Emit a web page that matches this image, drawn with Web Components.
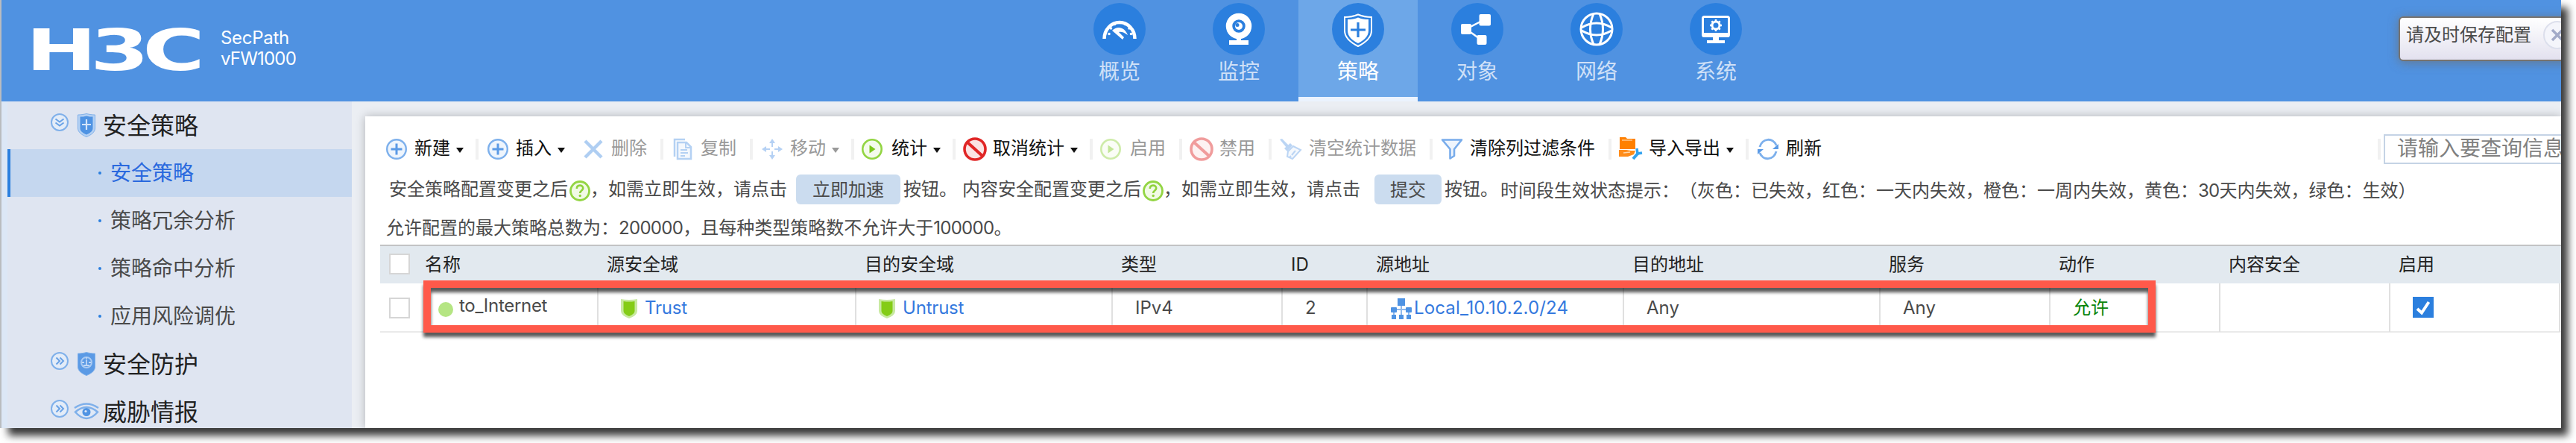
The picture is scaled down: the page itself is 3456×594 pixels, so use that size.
<!DOCTYPE html>
<html lang="zh-CN">
<head>
<meta charset="utf-8">
<title>SecPath vFW1000</title>
<style>
  body {
    margin: 0;
    width: 3456px;
    height: 594px;
    overflow: hidden;
    background: #fff;
    font-family: Inter, "Noto Sans CJK SC", sans-serif;
    font-size: 24px;
    color: #4a4a4a;
    text-spacing-trim: space-all;
  }
</style>
</head>
<body>
<app-window>
  <top-header slot="header">
    <nav-tab icon="gauge">概览</nav-tab>
    <nav-tab icon="camera">监控</nav-tab>
    <nav-tab icon="policy" active>策略</nav-tab>
    <nav-tab icon="share">对象</nav-tab>
    <nav-tab icon="globe">网络</nav-tab>
    <nav-tab icon="monitor">系统</nav-tab>
  </top-header>
  <side-menu slot="side">
    <menu-group icon="shieldPlus" open>安全策略</menu-group>
    <menu-item active>安全策略</menu-item>
    <menu-item>策略冗余分析</menu-item>
    <menu-item>策略命中分析</menu-item>
    <menu-item>应用风险调优</menu-item>
    <menu-group icon="shieldFace">安全防护</menu-group>
    <menu-group icon="eye">威胁情报</menu-group>
  </side-menu>
  <tool-bar>
    <tool-item icon="plus" arrow>新建</tool-item>
    <tool-item icon="plus" arrow nosep>插入</tool-item>
    <tool-item icon="cross" disabled>删除</tool-item>
    <tool-item icon="copy" disabled>复制</tool-item>
    <tool-item icon="move" arrow disabled>移动</tool-item>
    <tool-item icon="play" arrow>统计</tool-item>
    <tool-item icon="ban" arrow>取消统计</tool-item>
    <tool-item icon="play" disabled>启用</tool-item>
    <tool-item icon="ban" disabled>禁用</tool-item>
    <tool-item icon="broom" disabled>清空统计数据</tool-item>
    <tool-item icon="funnel">清除列过滤条件</tool-item>
    <tool-item icon="export" arrow>导入导出</tool-item>
    <tool-item icon="refresh" nosep>刷新</tool-item>
    <search-box slot="end" placeholder="请输入要查询信息"></search-box>
  </tool-bar>
  <policy-hint></policy-hint>
  <policy-table></policy-table>
  <save-toast slot="overlay">请及时保存配置</save-toast>
</app-window>

<script>
const ICONS = {
  gauge: ['0 0 70 70', `<circle cx="35" cy="35" r="35" fill="#2b7fde"/>
    <path d="M14.500 48a20.500 22 0 1 1 41 0" fill="none" stroke="#fff" stroke-width="4.500"/>
    <path d="M21 41.500v.01M23.500 34v.01M28.500 28.500v.01M35.500 26.500v.01M42.500 28.500v.01M48 34v.01M50.500 41.500v.01" stroke="#fff" stroke-width="3.600" stroke-linecap="round"/>
    <path d="M25 37c7-7 17-5 21 6-5-4-9-5-12-4l7 7-2 3z" fill="#fff"/>`],
  camera: ['0 0 70 70', `<circle cx="35" cy="35" r="35" fill="#2b7fde"/>
    <circle cx="35" cy="31" r="13" fill="none" stroke="#fff" stroke-width="8.500"/>
    <circle cx="35" cy="31" r="5" fill="#fff"/><circle cx="33" cy="29.500" r="2.500" fill="#2b7fde"/>
    <path d="M32 46h6v4h10v6H22v-6h10z" fill="#fff"/>`],
  policy: ['0 0 70 70', `<circle cx="35" cy="35" r="35" fill="#2b7fde"/>
    <path d="M35 15.500c6 2.500 12 3.500 18 3.500v18c0 10-8 16-18 21-10-5-18-11-18-21V19c6 0 12-1 18-3.500z" fill="none" stroke="#fff" stroke-width="2"/>
    <path d="M35 19.500c4 2 9 2.500 14 2.500v15c0 8-6 13-14 17-8-4-14-9-14-17V22c5 0 10-.5 14-2.500z" fill="#fff"/>
    <path d="M35 26v20M25 36h20" stroke="#2b7fde" stroke-width="3.200"/>`],
  share: ['0 0 70 70', `<circle cx="35" cy="35" r="35" fill="#2b7fde"/>
    <path d="M45 22L20 35l21 15" fill="none" stroke="#fff" stroke-width="2.500"/>
    <rect x="37.500" y="15" width="15.500" height="15.500" rx="2" fill="#fff"/>
    <rect x="13" y="28" width="14" height="14" rx="2" fill="#fff"/>
    <rect x="34.500" y="43" width="13" height="13" rx="2" fill="#fff"/>`],
  globe: ['0 0 70 70', `<circle cx="35" cy="35" r="35" fill="#2b7fde"/>
    <g fill="none" stroke="#fff" stroke-width="3"><circle cx="35" cy="35" r="21"/>
    <path d="M31 14.500q-9 20.500 0 41M39 14.500q9 20.500 0 41M15 33q20-12 40 0M15 37q20 12 40 0"/></g>`],
  monitor: ['0 0 70 70', `<circle cx="35" cy="35" r="35" fill="#2b7fde"/>
    <rect x="17.500" y="18.500" width="35" height="26" rx="2" fill="none" stroke="#fff" stroke-width="3"/>
    <path d="M17 40h36v5.500H17zM31 45h8v5h8v4H23v-4h8z" fill="#fff"/>
    <circle cx="35" cy="30" r="5" fill="none" stroke="#fff" stroke-width="3"/>
    <path d="M35 22v3M35 35v3M27 30h3M40 30h3M29.300 24.300l2.200 2.200M38.500 33.500l2.200 2.200M40.700 24.300l-2.200 2.200M31.500 33.500l-2.200 2.200" stroke="#fff" stroke-width="2.600"/>`],
  down: ['0 0 24 24', `<circle cx="12" cy="12" r="11" fill="#e3ecf8" stroke="#7fb0ea" stroke-width="2"/>
    <path d="M6.500 7.500l5.500 4 5.500-4M6.500 12.500l5.500 4 5.500-4" fill="none" stroke="#69a2e6" stroke-width="2"/>`],
  right: ['0 0 24 24', `<circle cx="12" cy="12" r="11" fill="#e3ecf8" stroke="#7fb0ea" stroke-width="2"/>
    <path d="M7.500 7.500l4.500 4.500-4.500 4.500M12.500 7.500L17 12l-4.500 4.500" fill="none" stroke="#69a2e6" stroke-width="2"/>`],
  shieldPlus: ['0 0 32 32', `<path d="M16 .5c4 1 8 1.500 11.500 1.500v18c0 5-5 9-11.500 11.500C9.500 29 4.500 25 4.500 20V2c3.500 0 7.500-.5 11.500-1.500z" fill="#b5d1f3" stroke="#7fb0ea"/>
    <path d="M16 3.500c3 1 5.500 1 8.500 1V20c0 4-4 6.500-8.500 8.500C11.500 26.500 7.500 24 7.500 20V4.500c3 0 5.500 0 8.500-1z" fill="#4f93e3"/>
    <path d="M16 8v14M10 15h12" stroke="#d4e5fa" stroke-width="2.200"/>`],
  shieldFace: ['0 0 32 32', `<path d="M16 .5c4 1 8 1.500 11.500 1.500v18c0 5-5 9-11.500 11.500C9.500 29 4.500 25 4.500 20V2c3.500 0 7.500-.5 11.500-1.500z" fill="#5b9ae5" stroke="#7fb0ea"/>
    <circle cx="16" cy="14" r="7" fill="#5b9ae5" stroke="#a9caf2" stroke-width="2"/>
    <path d="M10 14h3M19 14h3M16 10v7M12 18h8M16 7v2" stroke="#c0d8f6" stroke-width="1.800"/>`],
  eye: ['0 0 32 32', `<path d="M0 11q16-11 32 0" fill="none" stroke="#7fb0ea" stroke-width="2.500"/>
    <path d="M1 16.500q15-13 30 0-15 17-30 0z" fill="#dfe9f7" stroke="#7fb0ea" stroke-width="2.500"/>
    <circle cx="16" cy="16.500" r="5.500" fill="#5094e3"/><circle cx="15" cy="15.500" r="1.600" fill="#dfe9f7"/>`],
  plus: ['0 0 32 32', `<circle cx="16" cy="16" r="12.800" fill="#eef5fd" stroke="#7db0ec" stroke-width="2.400"/>
    <path d="M16 8.500v15M8.500 16h15" stroke="#5a9ae6" stroke-width="3"/>`],
  cross: ['0 0 32 32', `<path d="M5 5l22 22M27 5L5 27" stroke="#4f93e3" stroke-width="4.500"/>`],
  copy: ['0 0 32 32', `<path d="M5 26V3h14" fill="none" stroke="#5a9ae6" stroke-width="2.500"/>
    <path d="M9 7h12l6 6v16H9z" fill="#e8f1fc" stroke="#5a9ae6" stroke-width="2.500"/>
    <path d="M20 7v7h7M13 17h9M13 21h10M13 25h6" fill="none" stroke="#5a9ae6" stroke-width="2"/>`],
  move: ['0 0 32 32', `<path d="M16 2l4 6h-3v5h-2V8h-3zM16 30l4-6h-3v-5h-2v5h-3zM2 16l6-4v3h5v2H8v3zM30 16l-6-4v3h-5v2h5v3z" fill="#5a9ae6"/>`],
  play: ['0 0 32 32', `<circle cx="14" cy="16" r="12.700" fill="#f4fbec" stroke="#93d543" stroke-width="2.600"/>
    <path d="M10.500 10.500L18.500 16l-8 5.500z" fill="#7cc81c"/>`],
  ban: ['0 0 32 32', `<circle cx="16" cy="16" r="14" fill="#fbe3e3" stroke="#e02626" stroke-width="3.600"/>
    <path d="M5.500 6.500l21 19" stroke="#e02626" stroke-width="4"/>`],
  broom: ['0 0 32 32', `<path d="M1 3l3-1 9 9-3 3z" fill="#6ba3e8"/><path d="M7 15l8-7 3 3-7 8z" fill="#6ba3e8"/>
    <path d="M12 19l7-7 10 5-11 12-7-3z" fill="#e8f1fc" stroke="#6ba3e8" stroke-width="2"/><path d="M17 24l5-6M14 27l2-2" stroke="#6ba3e8" stroke-width="2"/>`],
  funnel: ['0 0 32 32', `<path d="M3 3.500h26L19 16v9l-5.500 3.500V16z" fill="#eff5fd" stroke="#78aceb" stroke-width="2.600" stroke-linejoin="round"/>`],
  export: ['0 0 32 32', `<path d="M1 0h8l2 2h11v14H1z" fill="#ff8000"/><path d="M4 4h14" stroke="#ffc78c" stroke-width="1.500"/>
    <path d="M0 17h10l6 1h6l-2 5-8 3H0z" fill="#ff8c1a"/><path d="M6 21l9-1" stroke="#ffd6a8" stroke-width="1.500"/>
    <path d="M19 29l7-8" stroke="#33a3ef" stroke-width="4"/><path d="M24 15l1 7 6-1" fill="none" stroke="#33a3ef" stroke-width="3.500"/>`],
  refresh: ['0 0 32 32', `<path d="M5 13C8 1 23 0 27 11M27 19C24 31 9 32 5 21" fill="none" stroke="#7db0ec" stroke-width="3"/>
    <path d="M30 9v7h-8zM2 23v-7h8z" fill="#5a9ae6"/>`],
  help: ['0 0 28 28', `<circle cx="14" cy="14" r="12.500" fill="#f1fae6" stroke="#93d543" stroke-width="2.800"/>
    <path d="M9.800 11c0-6 8.400-5.500 8.400-.8 0 3.300-4 3.300-4 6.800" fill="none" stroke="#8fd23c" stroke-width="2.600"/><circle cx="14.200" cy="20.500" r="1.700" fill="#8fd23c"/>`],
  zone: ['0 0 22 28', `<path d="M0 1q11 2 22 0v16q0 6-11 10Q0 23 0 17z" fill="#c8e9a0"/>
    <path d="M3.500 4q7.500 1 15 0v13q0 4-7.500 7-7.500-3-7.500-7z" fill="#84cc16"/>`],
  lan: ['0 0 28 28', `<path d="M14 8v17M4 19v-4h20v4M4 15v10M24 15v10" fill="none" stroke="#8fb9ec" stroke-width="2"/>
    <g fill="#4f93e3"><path d="M9 0h10v10H9z"/><rect y="12" width="8" height="7" rx="1"/><rect x="20" y="12" width="8" height="7" rx="1"/>
    <rect x="1" y="22" width="6" height="6"/><rect x="11" y="22" width="6" height="6"/><rect x="21" y="22" width="6" height="6"/></g>`],
  tick: ['0 0 28 28', `<path d="M0 0h28v28H0z" fill="#2b7fde"/><path d="M6 16l6 5.500L21.500 7" fill="none" stroke="#fff" stroke-width="4"/>`],
  close: ['0 0 38 38', `<circle cx="19" cy="19" r="18" fill="#f4f5fb" stroke="#dcdfec" stroke-width="2"/>
    <path d="M12 12l14 14M26 12L12 26" stroke="#a3abc8" stroke-width="3.500"/>`]
};

function icon(name) {
  const [box, body] = ICONS[name];
  const [, , w, h] = box.split(' ');
  return `<svg width="${w}" height="${h}" viewBox="${box}" overflow="visible">${body}</svg>`;
}

function define(tag, render) {
  customElements.define(tag, class extends HTMLElement {
    connectedCallback() {
      if (this.shadowRoot) return;
      this.attachShadow({ mode: 'open' });
      this.shadowRoot.innerHTML = '<style>svg { display: block; flex: none; }</style>' + render(this);
    }
  });
}

define('app-window', () => `
  <style>
    :host {
      display: block;
      position: relative;
      width: 3434px;
      height: 574px;
      margin-left: 2px;
      background: #ebeef3;
      box-shadow: -2px 0 0 #b9bcc0, 9px 10px 10px rgba(0, 0, 0, 0.78);
    }
    .clip { height: 574px; overflow: hidden; position: relative; }
    .body { display: flex; height: 438px; }
    main {
      flex: 1;
      min-width: 0;
      margin: 20px 0 0 18px;
      padding-left: 16px;
      background: #fff;
      box-shadow: 0 0 12px rgba(0, 0, 0, 0.25);
    }
  </style>
  <div class="clip">
    <slot name="header"></slot>
    <div class="body">
      <slot name="side"></slot>
      <main><slot></slot></main>
    </div>
    <slot name="overlay"></slot>
  </div>`);

define('top-header', () => `
  <style>
    :host { display: flex; height: 136px; background: #5092e1; color: #fff; }
    .brand { display: flex; width: 1420px; }
    .logo { margin: 18px 0 0 28px; }
    .logo text { font: bold 77px "DejaVu Sans", sans-serif; letter-spacing: -6px; fill: #fff; }
    .model { margin: 37px 0 0 16px; line-height: 28px; }
    .model div { letter-spacing: -0.3px; }
    .model div + div { letter-spacing: -0.8px; }
  </style>
  <div class="brand">
    <svg class="logo" width="250" height="100"><text x="3" y="76" transform="scale(1.48 1)">H3C</text></svg>
    <div class="model"><div>SecPath</div><div>vFW1000</div></div>
  </div>
  <slot></slot>`);

define('nav-tab', el => `
  <style>
    :host {
      display: flex;
      flex-direction: column;
      align-items: center;
      box-sizing: border-box;
      width: 160px;
      height: 136px;
      padding-top: 4px;
      font-size: 28px;
      line-height: 40px;
      color: #cfe0f7;
    }
    :host([active]) { background: #6da7e8; border-bottom: 6px solid #ebf3fe; color: #fff; }
    span { margin-top: 2px; }
  </style>
  ${icon(el.getAttribute('icon'))}<span><slot></slot></span>`);

define('side-menu', () => `
  <style>
    :host { display: block; box-sizing: border-box; width: 470px; background: #dfe5f1; border-left: 8px solid #dce7f6; }
  </style>
  <slot></slot>`);

define('menu-group', el => `
  <style>
    :host { display: flex; height: 64px; padding-left: 58px; font-size: 32px; line-height: 66px; color: #222; }
    svg:first-of-type { margin: 16px 8px 0 0; }
    svg:last-of-type { margin: 16px 6px 0 0; }
  </style>
  ${icon(el.hasAttribute('open') ? 'down' : 'right')}${icon(el.getAttribute('icon'))}<span><slot></slot></span>`);

define('menu-item', () => `
  <style>
    :host { display: flex; align-items: center; height: 64px; padding-left: 122px; font-size: 28px; line-height: 64px; }
    :host([active]) { background: #c5d7ef; box-shadow: inset 4px 0 #2b7fde; color: #2a69de; }
    i { width: 4px; height: 4px; margin-right: 12px; border-radius: 2px; background: #2b7fde; }
  </style>
  <i></i><span><slot></slot></span>`);

define('tool-bar', () => `
  <style>
    :host { display: flex; height: 40px; padding-top: 24px; }
    .end { margin-left: auto; }
  </style>
  <slot></slot><div class="end"><slot name="end"></slot></div>`);

define('tool-item', el => `
  <style>
    :host { display: flex; align-items: center; height: 40px; color: #111; line-height: 36px; white-space: nowrap; }
    svg { margin: 0 8px 0 10px; }
    .arrow { margin-left: 8px; margin-top: 2px; border: 5px solid transparent; border-top: 7px solid; border-bottom: 0; }
    .sep { width: 4px; height: 28px; margin-left: 18px; background: #f1f1f1; }
    .arrow + .sep { margin-left: 16px; }
    :host([nosep]) .sep { width: 0; margin-left: 12px; }
    :host([disabled]) { color: #999; }
    :host([disabled]) svg { opacity: 0.45; }
    span { margin-top: -2px; }
  </style>
  ${icon(el.getAttribute('icon'))}<span><slot></slot></span>
  ${el.hasAttribute('arrow') ? '<div class="arrow"></div>' : ''}<div class="sep"></div>`);

define('search-box', el => `
  <style>
    :host { display: flex; align-items: center; width: 246px; height: 40px; }
    .sep { flex: none; width: 4px; height: 28px; margin-right: 4px; background: #f1f1f1; }
    .field {
      flex: 1;
      box-sizing: border-box;
      height: 40px;
      padding-left: 16px;
      overflow: hidden;
      white-space: nowrap;
      border: 2px solid #c5d3e5;
      border-right: 0;
      font-size: 28px;
      line-height: 35px;
      color: #808080;
    }
  </style>
  <div class="sep"></div><div class="field">${el.getAttribute('placeholder')}</div>`);

define('hint-button', () => `
  <style>
    :host { height: 40px; border-radius: 6px; background: #cbdcef; text-align: center; line-height: 42px; }
  </style>
  <slot></slot>`);

define('policy-hint', () => `
  <style>
    :host { display: block; white-space: nowrap; }
    p { display: flex; margin: 0; height: 40px; }
    .first { margin: 14px 0 0 16px; line-height: 39px; }
    .second { margin: 14px 0 0 12px; line-height: 36px; }
    svg { margin: 8px 0 0 2px; }
    .num { letter-spacing: -0.7px; }
    .time { margin-left: 3px; line-height: 43px; }
  </style>
  <p class="first">
    <span>安全策略配置变更之后</span>${icon('help')}<span>，如需立即生效，请点击</span>
    <hint-button style="width: 140px; margin: 0 4px 0 12px">立即加速</hint-button>
    <span>按钮。</span><span style="margin-left: 7px">内容安全配置变更之后</span>${icon('help')}<span>，如需立即生效，请点击</span>
    <hint-button style="width: 90px; margin: 0 4px 0 19px">提交</hint-button>
    <span>按钮。</span><span class="time">时间段生效状态提示：（灰色：已失效，红色：一天内失效，橙色：一周内失效，黄色：<span class="num">30</span>天内失效，绿色：生效）</span>
  </p>
  <p class="second"><span>允许配置的最大策略总数为：<span class="num">200000</span>，且每种类型策略数不允许大于<span class="num">100000</span>。</span></p>`);

define('policy-table', () => `
  <style>
    :host { display: block; position: relative; margin-left: 4px; }
    .row {
      display: grid;
      grid-template-columns: 49px 244px 346px 344px 228px 114px 344px 344px 228px 228px 228px 228px 1fr;
      white-space: nowrap;
    }
    .head { height: 50px; margin-top: 0; border-top: 2px solid #c2c3c4; background: #e2e9ef; color: #222; line-height: 50px; }
    .head span { padding-left: 11px; }
    .data { height: 64px; border-bottom: 2px solid #eaeaea; line-height: 64px; }
    .data > div { display: flex; align-items: center; box-sizing: border-box; padding-left: 30px; border-right: 2px solid #e0e0e0; }
    .data > .pick { padding: 0; border: 0; }
    .data > div:last-child { border: 0; }
    .box { box-sizing: border-box; width: 28px; height: 28px; margin: 0 0 0 12px; background: #fff; border: 2px solid #d6d6d6; }
    .head .box { margin-top: 10px; }
    .dot { width: 20px; height: 20px; margin: 4px 8px 0 -1px; border-radius: 50%; background: #b5e583; }
    .name { margin-top: -5px; letter-spacing: -0.3px; }
    a { color: #3579de; }
    svg { margin-bottom: -2px; }
    .zone { margin-left: 10px; letter-spacing: -0.2px; }
    .net { margin-left: 3px; letter-spacing: 0.15px; }
    .ok { color: #098409; margin-top: 1px; }
    .mark {
      position: absolute;
      left: 58px;
      top: 48px;
      width: 2304px;
      height: 50px;
      border: 10px solid #ff594a;
      filter: drop-shadow(0 6px 2px rgba(0, 0, 0, 0.65));
    }
  </style>
  <div class="row head">
    <div class="box"></div><span>名称</span><span>源安全域</span><span>目的安全域</span><span>类型</span><span>ID</span>
    <span>源地址</span><span>目的地址</span><span>服务</span><span>动作</span><span>内容安全</span><span>启用</span>
  </div>
  <div class="row data">
    <div class="pick"><div class="box"></div></div>
    <div><i class="dot"></i><span class="name">to_Internet</span></div>
    <div>${icon('zone')}<a class="zone">Trust</a></div>
    <div>${icon('zone')}<a class="zone">Untrust</a></div>
    <div>IPv4</div>
    <div>2</div>
    <div style="padding-left: 31px">${icon('lan')}<a class="net">Local_10.10.2.0/24</a></div>
    <div>Any</div>
    <div>Any</div>
    <div><span class="ok">允许</span></div>
    <div></div>
    <div><div style="margin-top: -3px">${icon('tick')}</div></div>
    <div></div>
  </div>
  <div class="mark"></div>`);

define('save-toast', () => `
  <style>
    :host {
      position: absolute;
      left: 3216px;
      top: 22px;
      display: flex;
      box-sizing: border-box;
      width: 260px;
      height: 60px;
      padding-left: 8px;
      border: 2px solid #77736f;
      border-radius: 6px;
      background: linear-gradient(#fff, #e3e1ef);
      box-shadow: 0 2px 14px rgba(110, 110, 110, 0.7);
      line-height: 45px;
      white-space: nowrap;
    }
    svg { margin: 4px 0 0 16px; }
  </style>
  <span><slot></slot></span>${icon('close')}`);
</script>
</body>
</html>
